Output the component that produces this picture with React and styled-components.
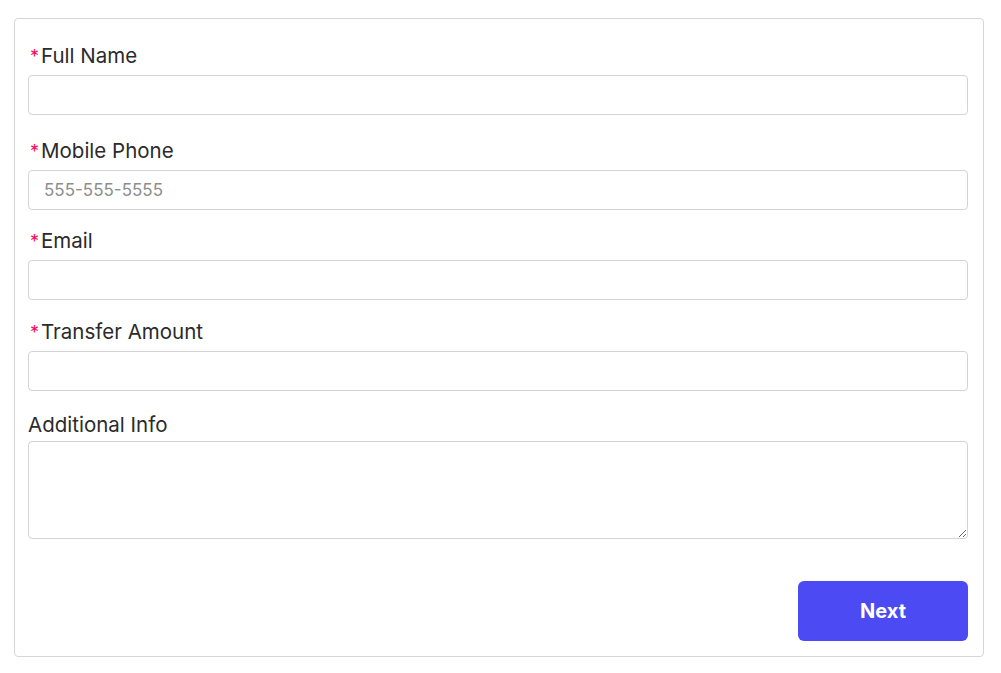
import React from "react";
import styled, { createGlobalStyle } from "styled-components";

const GlobalStyle = createGlobalStyle`
  body {
    margin: 0;
    background: #ffffff;
    font-family: Inter, "Noto Sans", sans-serif;
  }
`;

const Page = styled.div`
  padding: 18px 17px 16px 14px;
`;

const Card = styled.form`
  display: flex;
  flex-direction: column;
  box-sizing: border-box;
  width: 970px;
  padding: 25px 15px 15px 13px;
  border: 1px solid #d6d6d6;
  border-radius: 4px;
  background: #fff;
`;

const Field = styled.div`
  display: flex;
  flex-direction: column;
  margin-bottom: ${(props) => props.$gap}px;
`;

const Label = styled.label`
  display: flex;
  align-items: baseline;
  height: 24px;
  line-height: 24px;
  margin-bottom: ${(props) => (props.$tight ? "4px" : "7px")};
  font-size: 20.5px;
  color: #2b2b2b;
`;

const Required = styled.span`
  color: #f70a58;
  font-size: 18px;
  margin: 0 2px 0 2px;
`;

const Input = styled.input`
  box-sizing: border-box;
  width: 100%;
  height: 40px;
  padding: 0 15px;
  border: 1px solid #d4d4d4;
  border-radius: 4px;
  font-family: Inter, "Noto Sans", sans-serif;
  font-size: 17px;
  color: #333;
  outline: none;

  &::placeholder {
    color: #8d8d8d;
  }
`;

const TextArea = styled.textarea`
  box-sizing: border-box;
  display: block;
  width: 100%;
  height: 98px;
  padding: 8px 15px;
  border: 1px solid #d4d4d4;
  border-radius: 4px;
  font-family: Inter, "Noto Sans", sans-serif;
  font-size: 17px;
  outline: none;
`;

const Actions = styled.div`
  display: flex;
  justify-content: flex-end;
  margin-top: 42px;
`;

const Button = styled.button`
  width: 170px;
  height: 60px;
  border: none;
  border-radius: 6px;
  background: #4b4af3;
  color: #fff;
  font-family: Inter, "Noto Sans", sans-serif;
  font-size: 20px;
  font-weight: 700;
  cursor: pointer;
`;

const fields = [
  { label: "Full Name", gap: 24 },
  { label: "Mobile Phone", placeholder: "555-555-5555", gap: 19 },
  { label: "Email", gap: 20 },
  { label: "Transfer Amount", gap: 22 },
];

export default function App() {
  return (
    <>
      <GlobalStyle />
      <Page>
        <Card onSubmit={(e) => e.preventDefault()}>
          {fields.map((f) => (
            <Field key={f.label} $gap={f.gap}>
              <Label>
                <Required>*</Required>
                {f.label}
              </Label>
              <Input placeholder={f.placeholder} />
            </Field>
          ))}
          <Field $gap={0}>
            <Label $tight>Additional Info</Label>
            <TextArea />
          </Field>
          <Actions>
            <Button type="submit">Next</Button>
          </Actions>
        </Card>
      </Page>
    </>
  );
}
